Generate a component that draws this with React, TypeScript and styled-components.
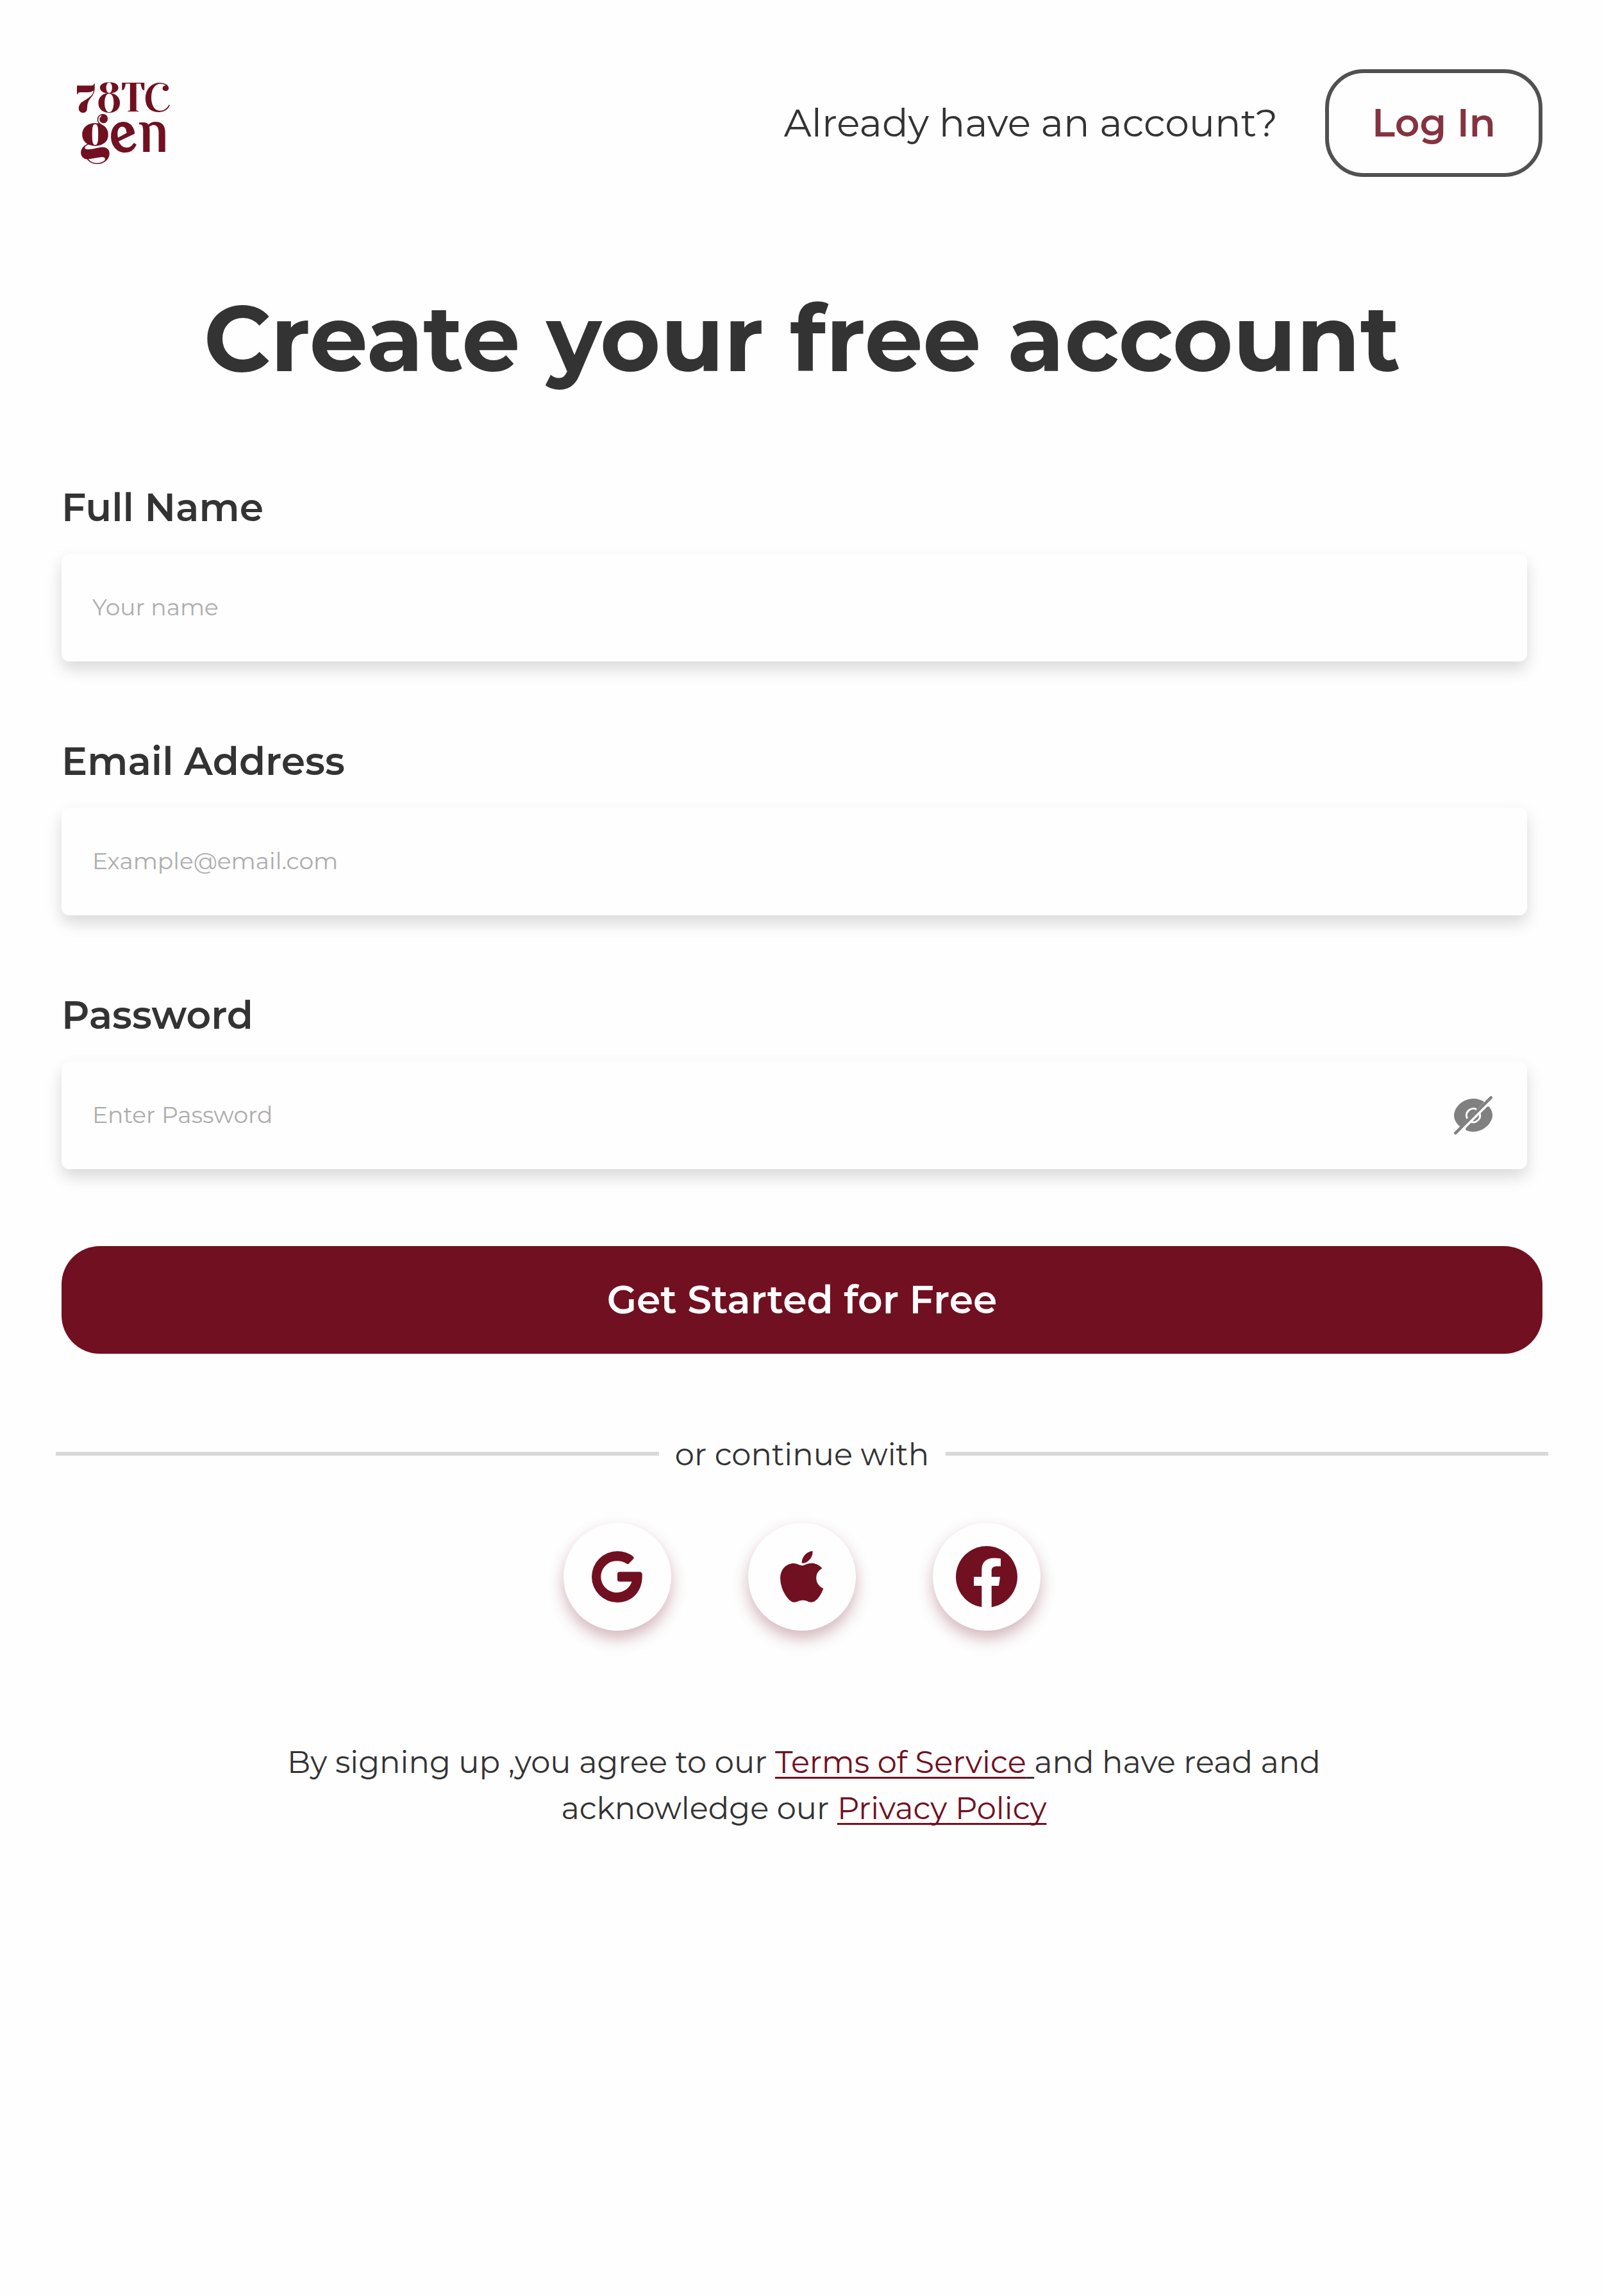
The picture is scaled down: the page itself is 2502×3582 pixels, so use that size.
import React from "react";
import styled, { createGlobalStyle } from "styled-components";
import { FaApple } from "react-icons/fa";

const wine = "#711020";
const ink = "#333333";
const paper = "#fefefe";

const GlobalStyle = createGlobalStyle`
  *, *::before, *::after { box-sizing: border-box; }
  body {
    margin: 0;
    background: ${paper};
    color: ${ink};
    font-family: "Montserrat", "Inter", sans-serif;
  }
`;

const Page = styled.main`
  min-height: 3582px;
  padding: 108px 96px 0;
  display: flex;
  flex-direction: column;
`;

const Header = styled.header`
  height: 168px;
  display: flex;
  align-items: center;
  justify-content: space-between;
`;

const Logo = styled.svg`
  width: 192px;
  height: 168px;
  fill: ${wine};
`;

const Glyph = styled.tspan<{ $font: string; $size: number; $weight?: number }>`
  font-family: ${(p) => `"${p.$font}"`}, "Playfair Display", "Liberation Serif", serif;
  font-size: ${(p) => p.$size}px;
  font-weight: ${(p) => p.$weight ?? 400};
`;

const HeaderActions = styled.div`
  display: flex;
  align-items: center;
  gap: 74px;
`;

const Prompt = styled.span`
  padding-bottom: 1px;
  font-size: 60px;
  line-height: 73px;
`;

const LoginButton = styled.button`
  width: 339px;
  height: 168px;
  padding: 0 0 1px;
  border: 6px solid ${ink};
  border-radius: 60px;
  background: transparent;
  color: ${wine};
  font: 600 60px/73px "Montserrat", "Inter", sans-serif;
  opacity: 0.85;
`;

const Title = styled.h1`
  margin: 164px 0 140px;
  font-size: 144px;
  font-weight: 700;
  line-height: 175px;
  text-align: center;
`;

const Form = styled.form`
  display: flex;
  flex-direction: column;
  gap: 119px;
`;

const Field = styled.label`
  width: 2286px;
  display: flex;
  flex-direction: column;
  gap: 36px;
`;

const FieldLabel = styled.span`
  font-size: 60px;
  font-weight: 600;
  line-height: 73px;
`;

const FieldBox = styled.span`
  height: 168px;
  padding: 0 54px 0 48px;
  display: flex;
  align-items: center;
  border-radius: 12px;
  background: ${paper};
  box-shadow: 0 12px 24px rgba(0, 0, 0, 0.15);
`;

const Input = styled.input`
  flex: 1;
  height: 168px;
  padding: 0 0 2px;
  border: 0;
  outline: 0;
  background: transparent;
  color: ${ink};
  font: 400 36px/44px "Montserrat", "Inter", sans-serif;
  &::placeholder { color: #adadad; opacity: 1; }
`;

const EyeSlash = styled.svg`
  width: 60px;
  height: 60px;
`;

const SubmitButton = styled.button`
  width: 100%;
  height: 168px;
  margin-top: 1px;
  padding: 0 0 1px;
  border: 0;
  border-radius: 60px;
  background: ${wine};
  color: ${paper};
  font: 600 60px/73px "Montserrat", "Inter", sans-serif;
`;

const Divider = styled.div`
  margin: 128px -9px 0;
  height: 58px;
  display: flex;
  align-items: center;
  justify-content: space-between;
  font-size: 48px;
  line-height: 58px;
`;

const Line = styled.span`
  width: 940.5px;
  height: 6px;
  margin-bottom: 2px;
  background: #d9d9d9;
`;

const Socials = styled.div`
  margin-top: 78px;
  display: flex;
  justify-content: center;
  gap: 120px;
`;

const SocialButton = styled.button`
  width: 168px;
  height: 168px;
  padding: 0;
  display: flex;
  align-items: center;
  justify-content: center;
  border: 0;
  border-radius: 50%;
  background: ${paper};
  color: ${wine};
  box-shadow: 0 12px 24px rgba(113, 16, 32, 0.3);
`;

const SocialIcon = styled.svg<{ $size: number }>`
  width: ${(p) => p.$size}px;
  height: ${(p) => p.$size}px;
  fill: currentColor;
`;

const Terms = styled.p`
  margin: 169px 0 0 6px;
  font-size: 48px;
  line-height: 72px;
  text-align: center;
`;

const Link = styled.a`
  color: ${wine};
  text-decoration: underline;
  text-decoration-thickness: 2.6px;
  text-decoration-skip-ink: none;
  text-underline-offset: 6px;
`;

const LinkTail = styled.span`
  text-decoration: underline;
  text-decoration-thickness: 2.6px;
  text-underline-offset: 6px;
`;

function BrandLogo() {
  return (
    <Logo viewBox="0 0 192 168" role="img" aria-label="78TC gen">
      <text>
        <Glyph $font="Elsie Swash Caps" $size={64} $weight={900} x="20.5" y="54.5" textLength="33.5" lengthAdjust="spacingAndGlyphs">7</Glyph>
        <Glyph $font="Gloock" $size={62} x="55.2" y="67" textLength="38" lengthAdjust="spacingAndGlyphs">8</Glyph>
        <Glyph $font="Yeseva One" $size={64} x="92.8" y="66.3" textLength="38" lengthAdjust="spacingAndGlyphs">T</Glyph>
        <Glyph $font="Vidaloka" $size={64} x="127.5" y="66.3" textLength="43" lengthAdjust="spacingAndGlyphs">C</Glyph>
      </text>
      <text>
        <Glyph $font="Elsie" $size={90} $weight={900} x="28.3" y="128" textLength="48" lengthAdjust="spacingAndGlyphs">g</Glyph>
        <Glyph $font="Young Serif" $size={92} x="74.5" y="129" textLength="43" lengthAdjust="spacingAndGlyphs">e</Glyph>
        <Glyph $font="Philosopher" $size={98} $weight={700} x="121" y="129" textLength="45" lengthAdjust="spacingAndGlyphs">n</Glyph>
      </text>
    </Logo>
  );
}

function EyeSlashIcon() {
  return (
    <EyeSlash viewBox="0 0 60 60" fill="none">
      <path fill="#808080" d="M47.2 9.3C43 6 37 4 30 4C14 4 0 17.5 0 30C0 37 4 43 9.7 47.8Z" />
      <path fill="#808080" d="M55.2 17.3C58.4 21 60 25.5 60 30C60 42 46 55.7 30 55.7C26.5 55.7 23 55 20 53.8C18 53 17.6 50.6 19 49.2L50.8 17.4C52 16 54 16 55.2 17.3Z" />
      <path stroke={paper} strokeWidth="3" d="M35 20.7A10.6 10.6 0 0 0 20.7 35M40.2 27A10.6 10.6 0 0 1 27 40.2" />
      <path stroke="#808080" strokeWidth="4.6" strokeLinecap="round" d="M57.6 2.4L2.4 57.6" />
    </EyeSlash>
  );
}

function GoogleIcon() {
  return (
    <SocialIcon $size={80} viewBox="0 0 80 80">
      <path d="M64.2 7.9C66 9.3 66 10.8 64.6 12.4L58 19.2C56.8 20.4 55.4 20.3 54 19.2C50 16.4 45.3 15.2 40.5 15.2A24.7 24.7 0 1 0 62.5 47.4L43.5 47.4Q40 47.4 40 43.9V35.8Q40 32.3 43.5 32.3H75Q78.2 32.3 78.7 36C78.8 37.3 78.8 39 78.7 40.5C78.3 64 62 80 40 80A40 40 0 0 1 40 0C49 0 57.5 2.9 64.2 7.9Z" />
    </SocialIcon>
  );
}

function FacebookIcon() {
  return (
    <SocialIcon $size={96} viewBox="0 0 96 96">
      <circle cx="48" cy="48" r="48" />
      <path fill={paper} d="M40.3 97V62H28V48H40.3V37C40.3 25 47.5 18.7 59 18.7C63 18.7 67 19 70 19.5V31.4H64C58 31.4 55.7 34.5 55.7 38V48H69L67 62H55.7V97Z" />
    </SocialIcon>
  );
}

const fields = [
  { label: "Full Name", placeholder: "Your name", type: "text" },
  { label: "Email Address", placeholder: "Example@email.com", type: "email" },
  { label: "Password", placeholder: "Enter Password", type: "password" },
];

export default function App() {
  return (
    <Page>
      <GlobalStyle />
      <Header>
        <BrandLogo />
        <HeaderActions>
          <Prompt>Already have an account?</Prompt>
          <LoginButton type="button">Log In</LoginButton>
        </HeaderActions>
      </Header>
      <Title>Create your free account</Title>
      <Form>
        {fields.map((f) => (
          <Field key={f.label}>
            <FieldLabel>{f.label}</FieldLabel>
            <FieldBox>
              <Input type={f.type} placeholder={f.placeholder} />
              {f.type === "password" && <EyeSlashIcon />}
            </FieldBox>
          </Field>
        ))}
        <SubmitButton type="button">Get Started for Free</SubmitButton>
      </Form>
      <Divider>
        <Line />
        or continue with
        <Line />
      </Divider>
      <Socials>
        <SocialButton type="button" aria-label="Google"><GoogleIcon /></SocialButton>
        <SocialButton type="button" aria-label="Apple"><FaApple size={91.4} /></SocialButton>
        <SocialButton type="button" aria-label="Facebook"><FacebookIcon /></SocialButton>
      </Socials>
      <Terms>
        By signing up ,you agree to our <Link>Terms of Service</Link><LinkTail> </LinkTail>and have read and
        <br />
        acknowledge our <Link>Privacy Policy</Link>
      </Terms>
    </Page>
  );
}
